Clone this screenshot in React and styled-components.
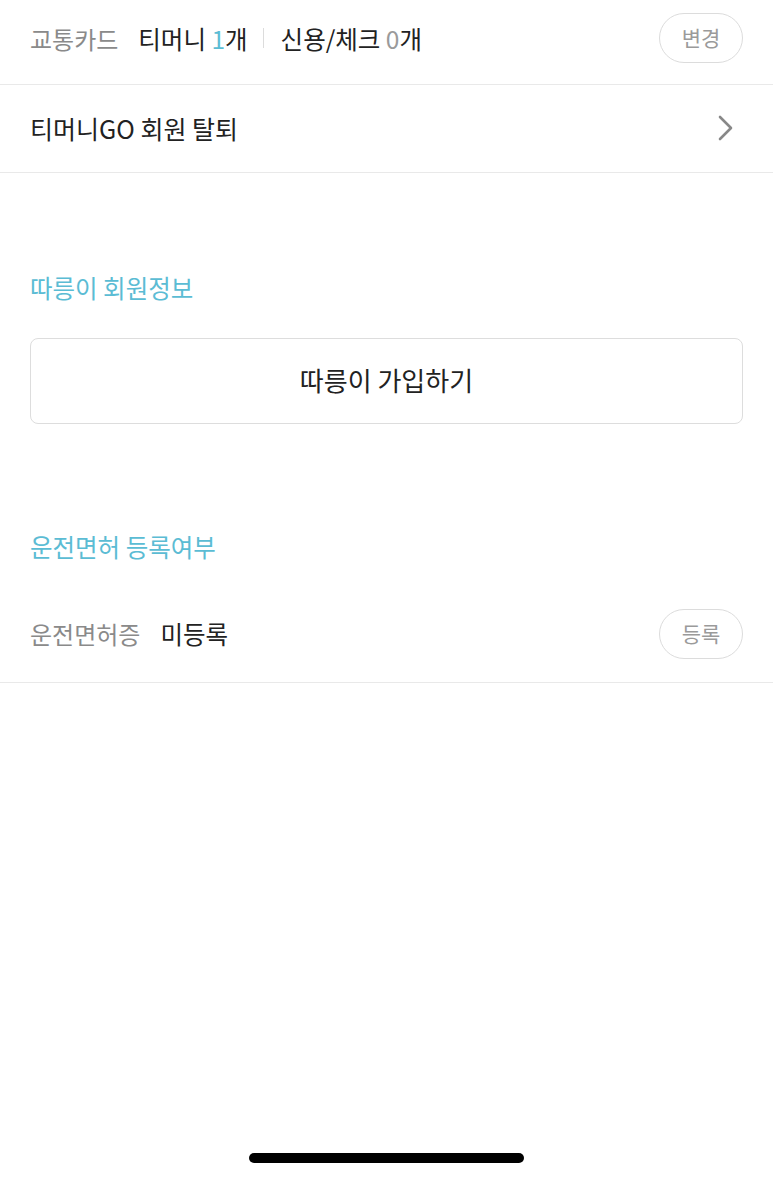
import React from 'react'
import styled, { createGlobalStyle } from 'styled-components'

const GlobalStyle = createGlobalStyle`
  html, body {
    margin: 0;
    padding: 0;
    background: #ffffff;
  }
  body {
    font-family: "Noto Sans CJK KR", "Noto Sans", sans-serif;
    color: #222;
  }
`

const Page = styled.div`
  width: 773px;
  min-height: 1179px;
  display: flex;
  flex-direction: column;
  position: relative;
`

const Row = styled.div`
  height: ${p => p.h || 84}px;
  display: flex;
  align-items: center;
  padding: 0 30px ${p => p.pb || 0}px;
  border-bottom: 1px solid #e9e9e9;
  box-sizing: border-box;
`

const Label = styled.span`
  font-size: 24px;
  color: #8a8a8a;
  margin-right: 20px;
`

const Value = styled.span`
  font-size: 24.5px;
  color: #222;
`

const Count = styled.span`
  color: ${p => p.color};
`

const Sep = styled.span`
  width: 1px;
  height: 20px;
  background: #dcdcdc;
  margin: 0 17px 0 15px;
`

const Spacer = styled.div`
  flex: 1;
`

const PillButton = styled.button`
  width: 84px;
  height: 50px;
  border: 1.5px solid #dcdcdc;
  border-radius: 25px;
  background: #fff;
  color: #9a9a9a;
  font-family: inherit;
  font-size: 21px;
  padding: 0 0 2px;
`

const LinkText = styled.span`
  font-size: 25px;
  color: #222;
`

const SectionTitle = styled.div`
  padding: 0 30px;
  font-size: 24.5px;
  color: #5bbcd4;
  margin-top: ${p => p.mt}px;
  height: 34px;
  line-height: 30px;
`

const BoxButton = styled.button`
  margin: 31px 30px 0;
  height: 86px;
  border: 1.5px solid #dddddd;
  border-radius: 8px;
  background: #fff;
  font-family: inherit;
  font-size: 26px;
  color: #222;
  padding: 0 0 4px;
`

const LicenseRow = styled(Row)`
  margin-top: 21px;
`

const HomeBar = styled.div`
  position: absolute;
  left: 249px;
  top: 1153px;
  width: 275px;
  height: 10px;
  border-radius: 5px;
  background: #000;
`

const Chevron = () => (
  <svg width="18" height="28" viewBox="0 0 18 28" style={{ marginRight: 8 }}>
    <path d="M3 3 L14 14 L3 25" fill="none" stroke="#888" strokeWidth="2.6" strokeLinecap="round" strokeLinejoin="round" />
  </svg>
)

export default function App() {
  return (
    <Page>
      <GlobalStyle />
      <Row h={85} pb={8}>
        <Label>교통카드</Label>
        <Value>티머니 <Count color="#5bbcd4">1</Count>개</Value>
        <Sep />
        <Value>신용/체크 <Count color="#9a9a9a">0</Count>개</Value>
        <Spacer />
        <PillButton>변경</PillButton>
      </Row>
      <Row h={88} pb={2}>
        <LinkText>티머니GO 회원 탈퇴</LinkText>
        <Spacer />
        <Chevron />
      </Row>
      <SectionTitle mt={100}>따릉이 회원정보</SectionTitle>
      <BoxButton>따릉이 가입하기</BoxButton>
      <SectionTitle mt={108}>운전면허 등록여부</SectionTitle>
      <LicenseRow h={96} pb={2}>
        <Label>운전면허증</Label>
        <Value>미등록</Value>
        <Spacer />
        <PillButton>등록</PillButton>
      </LicenseRow>
      <HomeBar />
    </Page>
  )
}
